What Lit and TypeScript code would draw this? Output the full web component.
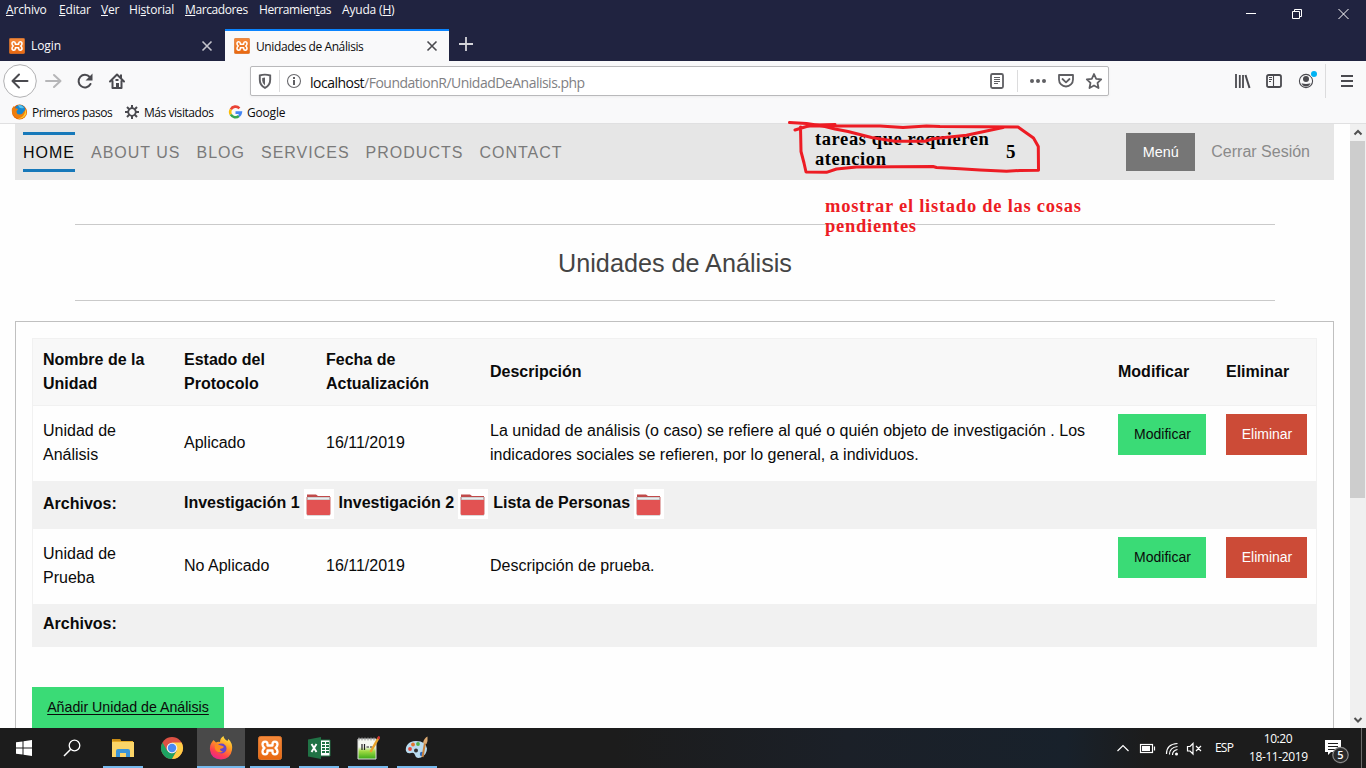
import { LitElement, html, css } from "lit";
import { customElement } from "lit/decorators.js";

const xamppLogo = html`<svg viewBox="0 0 24 24">
  <defs><linearGradient id="xo" x2="0" y2="1"><stop stop-color="#f58a3c"/><stop offset="1" stop-color="#e8670f"/></linearGradient></defs>
  <rect x=".5" y=".5" width="23" height="23" rx="2" fill="url(#xo)" stroke="#d9742c"/>
  <path d="M9.500 9.500h5V8.300q0-2.600 2.400-2.600 2.600 0 2.600 2.800 0 2-2 3.500 2 1.500 2 3.500 0 2.800-2.600 2.800-2.400 0-2.400-2.600v-1.200h-5v1.200q0 2.600-2.400 2.600-2.600 0-2.600-2.800 0-2 2-3.500-2-1.500-2-3.500 0-2.800 2.600-2.800 2.400 0 2.400 2.600z" fill="none" stroke="#fff" stroke-width="2.300" stroke-linejoin="round"/>
</svg>`;

const folder = html`<svg class="folder" viewBox="0 0 30 30">
  <rect width="30" height="30" fill="#fff"/>
  <path d="M3 5.500h9l2 1.500h12v4H3z" fill="#c04a4a"/>
  <path d="M3 8h23v18.500H3z" fill="#b9b0b0"/>
  <path d="M4 8.500h21v2H4z" fill="#e8eef0"/>
  <path d="M3 11h23v14q0 1-1 1H4q-1 0-1-1z" fill="#e25252"/>
  <path d="M2.500 8v17.500M26.500 8v17.500" stroke="#e5b3b3" fill="none"/>
</svg>`;

@customElement("browser-chrome")
class BrowserChrome extends LitElement {
  static styles = css`
    :host { display: block; height: 124px; font: 12px "Open Sans", "Noto Sans", sans-serif; box-sizing: border-box; color: #0c0c0d; background: #f9f9fa; border-bottom: 1px solid #e0e0e1; }
    svg { display: block; flex: none; }
    .top { background: #202340; height: 61px; color: #f9f9fa; display: flex; flex-direction: column; box-sizing: border-box; }
    .menu { height: 29px; display: flex; justify-content: space-between; }
    .names { display: grid; grid-template-columns: 53px 42px 28px 56px 74px 83px 70px; padding: 1px 0 0 6px; line-height: 17px; letter-spacing: -.18px; white-space: nowrap; }
    .names .tight { letter-spacing: -.4px; }
    u { text-underline-offset: 1px; text-decoration-thickness: 1px; }
    .win { display: flex; gap: 36px; padding: 8px 17px 0 0; }
    .tabs { display: flex; height: 32px; }
    .tab { display: flex; align-items: center; box-sizing: border-box; padding: 1px 12px 0 9px; width: 225px; }
    .tab.on { width: 224px; background: #f9f9fa; color: #0c0c0d; border-top: 2px solid #0a84ff; padding-top: 0; padding-right: 11px; }
    .tab span { flex: 1; padding-left: 6px; letter-spacing: -.1px; }
    .tab.on span { letter-spacing: -.4px; }
    .fav { width: 16px; height: 16px; display: block; }
    .fav svg { width: 16px; height: 16px; }
    .plus { margin: 8px 0 0 10px; }
    .tools { height: 40px; display: flex; align-items: center; }
    .nav { width: 250px; height: 40px; }
    .url { width: 859px; height: 30px; box-sizing: border-box; border: 1px solid #b9b9bb; border-radius: 2px; background: #fff; display: flex; align-items: center; box-shadow: 0 1px 3px #0000000d; }
    .addr { flex: 1; font-size: 14px; letter-spacing: -.51px; color: #808083; padding-top: 2px; }
    .addr b { font-weight: 400; color: #0c0c0d; }
    .right { width: 257px; height: 40px; }
    .marks { height: 22px; display: flex; align-items: center; letter-spacing: -.45px; padding-left: 11px; }
    .marks span { display: block; padding-left: 4px; white-space: nowrap; box-sizing: border-box; }
    .marks .a { width: 97px; }
    .marks .b { width: 89px; padding-left: 5px; }
    .marks .c { letter-spacing: -.2px; }
  `;
  render() {
    const x = (c: string) => html`<svg width="12" height="12" viewBox="0 0 12 12"><path d="M1.500 1.500l9 9M10.500 1.500l-9 9" stroke=${c} stroke-width="1.600"/></svg>`;
    return html`
      <div class="top">
        <div class="menu">
          <div class="names"><span><u>A</u>rchivo</span><span><u>E</u>ditar</span><span><u>V</u>er</span><span>Hi<u>s</u>torial</span><span class="tight"><u>M</u>arcadores</span><span class="tight">Herramien<u>t</u>as</span><span>Ayuda (<u>H</u>)</span></div>
          <div class="win">
            <svg width="10" height="12"><path d="M0 5.500h10" stroke="#fff"/></svg>
            <svg width="10" height="12"><path d="M.5 3.500h7v7h-7zM2.500 3V1.500h7v7H8" fill="none" stroke="#fff"/></svg>
            <svg width="11" height="12"><path d="M.5 1l10 10M10.500 1l-10 10" stroke="#fff"/></svg>
          </div>
        </div>
        <div class="tabs">
          <div class="tab"><div class="fav">${xamppLogo}</div><span>Login</span>${x("#c4c4cc")}</div>
          <div class="tab on"><div class="fav">${xamppLogo}</div><span>Unidades de Análisis</span>${x("#4a4a4f")}</div>
          <svg class="plus" width="14" height="14"><path d="M7 0v14M0 7h14" stroke="#d4d4da" stroke-width="1.800"/></svg>
        </div>
      </div>
      <div class="tools">
        <svg class="nav" viewBox="0 61 250 40">
          <circle cx="20" cy="81" r="16.300" fill="#fff" stroke="#b1b1b3"/>
          <g fill="none" stroke="#4a4a4f" stroke-width="2" stroke-linecap="round" stroke-linejoin="round">
            <path d="M27.500 81H13m6-6.500L12.500 81l6.500 6.500"/>
            <path d="M46 81h14m-6-6l6.500 6-6.500 6" stroke="#b6b6b8"/>
            <path d="M89.700 77A6.300 6.300 0 1 0 90.500 84"/>
            <path d="M110 81.500l7-7 7 7M112.500 81v7h9v-7"/>
          </g>
          <path d="M92.500 73.500v7h-7zM116 83h3v5h-3zM120 74.500h2v4h-2zM115.500 79h3v2h-3z" fill="#4a4a4f"/>
        </svg>
        <div class="url">
          <svg width="59" height="28" viewBox="251 67 59 28">
            <path d="M259.800 75.500q5-1.800 10.400 0v4.200q0 5.500-5.200 8.200-5.200-2.700-5.200-8.200z" fill="none" stroke="#5f5f63" stroke-width="1.900"/>
            <path d="M265 77.500v8q-2.800-2-2.800-5v-2.500z" fill="#5f5f63"/>
            <path d="M279.500 70v22" stroke="#dcdcdd"/>
            <circle cx="294" cy="81" r="6.500" fill="none" stroke="#6a6a6e" stroke-width="1.100"/>
            <path d="M293 80h2v5h-2zM293 77h2v2h-2z" fill="#5f5f63"/>
          </svg>
          <div class="addr"><b>localhost</b>/FoundationR/UnidadDeAnalisis.php</div>
          <svg width="124" height="28" viewBox="984 67 124 28">
            <g fill="none" stroke="#5f5f63" stroke-width="1.800" stroke-linejoin="round">
              <rect x="991" y="74" width="12" height="14" rx="1.500"/>
              <path d="M994 77.500h6M994 79.500h6M994 81.500h6M994 83.500h4" stroke-width="1"/>
              <path d="M1059 75h14v4.500a7 7 0 0 1-14 0z"/><path d="M1062.500 79l3.500 3.300 3.500-3.300" stroke-linecap="round"/>
              <path d="M1094 74l2.200 4.800 5 .6-3.700 3.500 1 5.100-4.500-2.500-4.500 2.500 1-5.100-3.700-3.500 5-.6z"/>
            </g>
            <path d="M1017.500 70v22" stroke="#dcdcdd"/>
            <g fill="#5f5f63"><circle cx="1032" cy="81" r="2"/><circle cx="1038" cy="81" r="2"/><circle cx="1044" cy="81" r="2"/></g>
          </svg>
        </div>
        <svg class="right" viewBox="1109 61 257 40">
          <g fill="none" stroke="#4a4a4f" stroke-width="1.800">
            <path d="M1236 74v14M1239.800 75v13M1243 75v13" /><path d="M1245.500 75l4 13" stroke-width="2"/>
            <rect x="1267" y="75" width="14" height="12" rx="1.800"/><path d="M1273.500 75v12M1269 77.500h3M1269 79.500h3M1269 81.500h2" stroke-width="1.100"/>
            <circle cx="1306" cy="81" r="6.600" stroke-width="1.100"/>
            <path d="M1341 76h12M1341 81h12M1341 86h12" stroke-width="2"/>
          </g>
          <circle cx="1306" cy="79" r="3" fill="#4a4a4f"/><path d="M1301.500 83.200q4.500 1.500 9 0-1.500 3.300-4.500 3.300t-4.500-3.300z" fill="#4a4a4f"/>
          <circle cx="1314" cy="74" r="3.800" fill="#f9f9fa"/><circle cx="1314" cy="74" r="3" fill="#00b3f4"/>
          <path d="M1325.500 64v34" stroke="#dcdcdd"/>
        </svg>
      </div>
      <div class="marks">
        <svg width="17" height="16" viewBox="0 0 17 16"><circle cx="8.500" cy="8" r="7.500" fill="#e66000"/><circle cx="9" cy="6" r="5.300" fill="#1687cf"/><path d="M7 1q4-.5 6 3-4 1-5-1z" fill="#55c3ee"/><path d="M1 4.500L2.800 2l1 2.200q3 0 3.200 1.300L5.500 7q0 3.500 3 3.500 3 0 4-2.500l2.500-3q2 5-1.500 8-4.500 4-9.500 0-4-3-3-8.500z" fill="#ef7d0c"/><path d="M14.500 5q2 5-1.500 8-3 2.500-6 1.500 7-1 7.500-9.500z" fill="#ffcb2d"/></svg>
        <span class="a">Primeros pasos</span>
        <svg width="14" height="14" viewBox="-7 -7 14 14"><circle r="3.800" fill="none" stroke="#4a4a4f" stroke-width="1.800"/><path d="M0-7v3M0 4v3M-7 0h3M4 0h3M-5-5l2.200 2.200M5 5L2.800 2.800M-5 5l2.200-2.200M5-5L2.800-2.800" stroke="#4a4a4f" stroke-width="2"/></svg>
        <span class="b">Más visitados</span>
        <svg width="15" height="14" viewBox="-7.500 -7 15 14"><g fill="none" stroke-width="2.600"><path d="M3.900-3.700A5.300 5.300 0 0 0-4.700-2.500" stroke="#ea4335"/><path d="M-4.700-2.500A5.300 5.300 0 0 0-4.700 2.500" stroke="#fbbc05"/><path d="M-4.700 2.500A5.300 5.300 0 0 0 3.400 4" stroke="#34a853"/><path d="M3.400 4A5.300 5.300 0 0 0 5.300.6H0" stroke="#4285f4"/></g></svg>
        <span class="c">Google</span>
      </div>`;
  }
}

@customElement("units-page")
class UnitsPage extends LitElement {
  static styles = css`
    :host { display: flex; height: 604px; overflow: hidden; background: #fefefe; font: 16px/24px "Liberation Sans", Arial, sans-serif; color: #0a0a0a; }
    .body { flex: 1; padding: 0 16px 0 15px; display: flex; flex-direction: column; }
    .bar { height: 56px; background: #e6e6e6; display: flex; justify-content: space-between; align-items: flex-start; padding: 0 24px 0 8px; box-sizing: border-box; flex: none; }
    .links { display: flex; gap: 16px; padding-top: 8px; letter-spacing: 1px; color: #7a7a7a; }
    .links span { height: 40px; line-height: 41px; box-sizing: border-box; }
    .links .on { color: #0a0a0a; border: solid #1779ba; border-width: 3px 0; line-height: 35px; }
    .acct { display: flex; gap: 16px; padding-top: 9px; color: #8a8a8a; line-height: 37px; }
    .menu { background: #767676; color: #fefefe; width: 69px; height: 38px; text-align: center; font-size: 14.400px; line-height: 39px; }
    .title { margin: 44px 59px 20px 60px; height: 77px; box-sizing: border-box; border: solid #cacaca; border-width: 1px 0; text-align: center; font-size: 25.200px; line-height: 77px; color: #444; flex: none; }
    .panel { border: 1px solid #c0c0c0; flex: 1; padding: 16px; }
    .table { border: 1px solid #f1f1f1; width: 1283px; }
    .row { display: grid; grid-template-columns: 141px 142px 164px 628px 108px 99px; align-items: center; }
    .row > div { padding-left: 10px; }
    .head { height: 66px; background: #f8f8f8; border-bottom: 1px solid #f1f1f1; font-weight: 700; }
    .unit { height: 75px; padding-bottom: 2px; background: #fefefe; box-sizing: border-box; }
    .unit .act { align-self: start; padding-top: 8px; }
    .files { background: #f1f1f1; height: 48px; box-sizing: border-box; font-weight: 700; margin: 0 -1px; padding: 0 0 2px 1px; }
    .files .list { grid-column: 2 / 7; display: flex; align-items: center; white-space: pre; }
    .files.last { height: 43px; margin-bottom: -1px; padding-bottom: 4px; }
    .folder { width: 30px; height: 30px; display: block; margin: 0 5px 0 4px; }
    .list span { margin-top: -2px; }
    .btn { display: block; height: 41px; line-height: 41px; text-align: center; font-size: 14.200px; background: #3adb76; color: #0a0a0a; width: 88px; }
    .btn.del { background: #cc4b37; color: #fefefe; width: 81px; }
    .add { width: 192px; margin-top: 40px; text-decoration: underline; text-underline-offset: 2px; }
    .act .btn { font-size: 14px; text-indent: 1px; }
    .scroll { width: 16px; background: #f0f0f0; display: flex; flex-direction: column; align-items: center; }
    .scroll svg { display: block; flex: none; }
    .thumb { width: 15px; height: 357px; background: #cdcdcd; align-self: flex-start; }
    .gap { flex: 1; }
  `;
  unit(name: string[], state: string, desc: unknown) {
    return html`<div class="row unit"><div>${name[0]}<br>${name[1]}</div><div>${state}</div><div>16/11/2019</div><div>${desc}</div>
      <div class="act"><a class="btn">Modificar</a></div><div class="act"><a class="btn del">Eliminar</a></div></div>`;
  }
  render() {
    return html`
      <div class="body">
        <div class="bar">
          <div class="links"><span class="on">HOME</span><span>ABOUT US</span><span>BLOG</span><span>SERVICES</span><span>PRODUCTS</span><span>CONTACT</span></div>
          <div class="acct"><span class="menu">Menú</span><span>Cerrar Sesión</span></div>
        </div>
        <div class="title">Unidades de Análisis</div>
        <div class="panel">
          <div class="table">
            <div class="row head"><div>Nombre de la<br>Unidad</div><div>Estado del<br>Protocolo</div><div>Fecha de<br>Actualización</div><div>Descripción</div><div>Modificar</div><div>Eliminar</div></div>
            ${this.unit(["Unidad de", "Análisis"], "Aplicado", html`La unidad de análisis (o caso) se refiere al qué o quién objeto de investigación . Los<br>indicadores sociales se refieren, por lo general, a individuos.`)}
            <div class="row files"><div>Archivos:</div><div class="list"><span>Investigación 1</span>${folder}<span>Investigación 2</span>${folder}<span>Lista de Personas</span>${folder}</div></div>
            ${this.unit(["Unidad de", "Prueba"], "No Aplicado", "Descripción de prueba.")}
            <div class="row files last"><div>Archivos:</div></div>
          </div>
          <a class="btn add">Añadir Unidad de Análisis</a>
        </div>
      </div>
      <div class="scroll">
        <svg width="16" height="17"><path d="M4.500 10.500L8 7l3.500 3.500" fill="none" stroke="#505050" stroke-width="2"/></svg>
        <div class="thumb"></div><div class="gap"></div>
        <svg width="16" height="17"><path d="M4.500 7L8 10.500 11.500 7" fill="none" stroke="#505050" stroke-width="2"/></svg>
      </div>`;
  }
}

@customElement("task-bar")
class TaskBar extends LitElement {
  static styles = css`
    :host { display: flex; height: 40px; background: linear-gradient(90deg, #1c1c1c 0 45%, #1b2028 62%, #18212b 78%, #1c1c1c 84%); color: #fff; font: 12px "Open Sans", "Noto Sans", sans-serif; justify-content: space-between; }
    svg { display: block; }
    .apps { display: flex; gap: 1px; }
    .app { width: 48px; height: 40px; display: flex; justify-content: center; align-items: center; box-sizing: border-box; }
    .app svg { width: 24px; height: 24px; }
    .start { width: 47px; }
    .files { margin-left: 2px; }
    .run { background: linear-gradient(#76b9ed, #76b9ed) 50% 100% / 40px 2px no-repeat; }
    .on { background: linear-gradient(#76b9ed, #76b9ed) 50% 100% / 48px 2px no-repeat #494949; }
    .tray { display: flex; }
    .esp { padding-top: 12px; width: 34px; line-height: 16px; letter-spacing: -.8px; }
    .clock { width: 58px; text-align: center; line-height: 18px; padding-top: 2px; letter-spacing: -.4px; white-space: nowrap; }
  `;
  render() {
    return html`
      <div class="apps">
        <div class="app start"><svg viewBox="0 0 24 24"><path d="M4 6.300l6.500-.9v6.100H4zM11.500 5.200L20 4v7.500h-8.500zM4 12.500h6.500v6.100L4 17.700zM11.500 12.500H20V20l-8.500-1.200z" fill="#fff"/></svg></div>
        <div class="app"><svg viewBox="0 0 24 24"><circle cx="14.500" cy="9.500" r="5.300" fill="none" stroke="#fff" stroke-width="1.300"/><path d="M10.700 13.300L4 20" stroke="#fff" stroke-width="1.500"/></svg></div>
        <div class="app files run"><svg viewBox="0 0 24 24"><path d="M1 3h8l1 2h12v16H1z" fill="#e8ab25"/><path d="M1 6h22v15H1z" fill="#fbd568"/><path d="M1 3h8l1 2H2z" fill="#c78b15"/><path d="M5 21v-6q0-2 2-2h10q2 0 2 2v6h-4v-4H9v4z" fill="#3a95d8"/></svg></div>
        <div class="app"><svg viewBox="-12 -12 24 24"><circle r="11" fill="#dd5144"/><path d="M-9.530-5.500A11 11 0 0 0 0 11L4.800 2.700 0 5.500-4.800 2.700z" fill="#1da362"/><path d="M0 11A11 11 0 0 0 9.530-5.500H0L4.800 2.700z" fill="#ffcd46"/><circle r="5.300" fill="#f1f1f1"/><circle r="4.200" fill="#4a8af4"/></svg></div>
        <div class="app on"><svg viewBox="0 0 24 24">
          <defs><linearGradient id="ff" x1=".8" x2=".3" y2="1"><stop stop-color="#fff04a"/><stop offset=".4" stop-color="#ff9a22"/><stop offset=".75" stop-color="#ff3f50"/><stop offset="1" stop-color="#e52390"/></linearGradient></defs>
          <path d="M4.500 4L7 6.500q2-1 4-.5 0-4 3.500-6 .3 3 4 5l.8-2Q24 7 23 14q-1.500 9-11 9.500Q2 23 1 14q-.5-5 2-8z" fill="url(#ff)"/><circle cx="12.500" cy="12.500" r="5" fill="#6545c8"/><path d="M6 9q4-.5 6 .5 2 0 3 1.500-1 1.500-4 2 0 2 3 2.500-3 2-6 0Q5 13 6 9z" fill="#ff8b1f"/></svg></div>
        <div class="app run">${xamppLogo}</div>
        <div class="app run"><svg viewBox="0 0 24 24"><path d="M12 4h11v16H12z" fill="#fff" stroke="#207245"/><path d="M15 6h3v2h-3zM15 9h3v2h-3zM15 12h3v2h-3zM15 15h3v2h-3zM19 6h3v2h-3zM19 9h3v2h-3zM19 12h3v2h-3zM19 15h3v2h-3z" fill="#207245"/><path d="M1 3.500L14 1v22L1 20.500z" fill="#207245"/><path d="M4.500 8l5 8M9.500 8l-5 8" stroke="#fff" stroke-width="1.900"/></svg></div>
        <div class="app run"><svg viewBox="0 0 24 24"><defs><linearGradient id="np" x2="0" y2="1"><stop offset=".4" stop-color="#f4f8f0"/><stop offset=".6" stop-color="#a3dc45"/><stop offset="1" stop-color="#38a818"/></linearGradient></defs><path d="M2 3h18v20H2z" fill="url(#np)" stroke="#ddd"/><path d="M3 1.500v3M6 1.500v3M9 1.500v3M12 1.500v3M15 1.500v3M18 1.500v3" stroke="#999"/><path d="M6 8v6M8.500 8v6M10.500 11h2.500M14 11h2.500" stroke="#222" stroke-width="1.200"/><path d="M22.500 2l-8 14" stroke="#e8a22a" stroke-width="2.500"/><path d="M23.500.5l-1.500 2.500" stroke="#c33" stroke-width="2.500"/></svg></div>
        <div class="app run"><svg viewBox="0 0 24 24"><path d="M11 5C3 5 0 11 1 15q1 3 5 2 3-1 4 2 1 4 6 2.500 6-3 6-9Q21 5 11 5z" fill="#b9dcf0"/><circle cx="5" cy="13" r="1.900" fill="#e34a3a"/><circle cx="8" cy="8.500" r="1.900" fill="#e2742f"/><circle cx="13" cy="8" r="1.900" fill="#53b04a"/><circle cx="17" cy="18" r="2.200" fill="#2d68bd"/><circle cx="11" cy="14.500" r="2" fill="#333"/><path d="M20 7l-2.500 14" stroke="#c9823d" stroke-width="2"/><path d="M18 7q1-5 4.500-6.500Q23 5 21.500 8z" fill="#ddaa72"/></svg></div>
      </div>
      <div class="tray">
        <svg width="105" height="40" viewBox="1110 728 105 40"><g fill="none" stroke="#fff" stroke-width="1.200">
          <path d="M1117.500 751l5.500-5.500 5.500 5.500"/><rect x="1140.500" y="744.500" width="12" height="8"/><path d="M1154.500 746.500v4"/>
          <path d="M1166.500 754q0-10 11-10.500M1169.500 754.500q0-7 8-8M1172.500 755q0-4.500 5-5.500"/>
          <path d="M1187.500 746.500h2.500l3-3v10.500l-3-3h-2.500zM1196 746l5 5M1201 746l-5 5"/></g><path d="M1142 746h8v5h-8z" fill="#fff"/><circle cx="1176.500" cy="754" r="1.500" fill="#fff"/></svg>
        <div class="esp">ESP</div>
        <div class="clock">10:20<br>18-11-2019</div>
        <svg width="59" height="40" viewBox="1307 728 59 40"><path d="M1325 740h16v12h-10l-3 3v-3h-3z" fill="#fff"/><path d="M1328 743.500h10M1328 746.500h10M1328 749.500h7" stroke="#1c1c1c"/><circle cx="1340.500" cy="755" r="7.700" fill="#2b2b2b" stroke="#8a8a8a" stroke-width="1.200"/><text x="1337.300" y="759" font-size="11" font-weight="600" fill="#fff" font-family="Open Sans">5</text><path d="M1361.500 728v40" stroke="#6b6b6b"/></svg>
      </div>`;
  }
}

@customElement("app-root")
class AppRoot extends LitElement {
  static styles = css`
    :host { display: block; width: 1366px; height: 768px; overflow: hidden; position: relative; background: #fefefe; }
    .note { position: absolute; font: 700 18.500px/20px "Liberation Serif", serif; white-space: nowrap; letter-spacing: .75px; }
    .tasks { left: 815px; top: 129px; color: #000; letter-spacing: .6px; }
    .count { left: 1006px; top: 142px; color: #000; font-size: 19px; }
    .ask { left: 825px; top: 196px; color: #ed1c24; }
    .ink { position: absolute; left: 780px; top: 115px; width: 270px; height: 65px; }
  `;
  render() {
    return html`
      <browser-chrome></browser-chrome>
      <units-page></units-page>
      <task-bar></task-bar>
      <div class="note tasks">tareas que requieren<br>atencion</div>
      <div class="note count">5</div>
      <div class="note ask">mostrar el listado de las cosas<br>pendientes</div>
      <svg class="ink" viewBox="780 115 270 65" fill="none" stroke="#ed1c24" stroke-width="3" stroke-linecap="round" stroke-linejoin="round">
        <path d="M789.500 122.500L806.500 123.500 823 126 835 129 848 131.500 871.500 137.500 895 141.300H925L933 138.700 966.500 135.300 986.500 131 1003 127.500"/>
        <path d="M795 130L806.500 126.500 816.500 125 835 124.500M808 126H880L903 127.500 926.500 126 940 126.500 1018 127 1025 132 1033.500 138 1038.300 146.500 1038.500 170.300 1020 170.500 1006.500 171.300 980 170 960 168.700 936.500 167.500 933 166.500 856.500 167 836.500 169 826.500 172.300 806 172 804 163 801 151.500 800.500 127"/>
      </svg>`;
  }
}
